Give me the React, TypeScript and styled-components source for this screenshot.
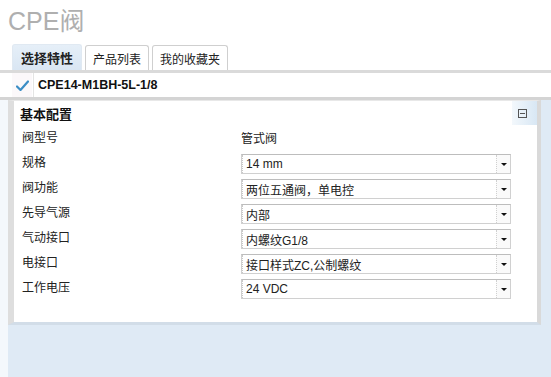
import React from 'react';
import styled, { createGlobalStyle } from 'styled-components';

const GlobalStyle = createGlobalStyle`
  html, body {
    margin: 0;
    padding: 0;
    background: #fff;
  }
  body {
    font-family: "Liberation Sans", "Noto Sans CJK SC", sans-serif;
    font-size: 12px;
    color: #222;
  }
`;

const Page = styled.div`
  width: 551px;
  height: 377px;
  display: flex;
  flex-direction: column;
  overflow: hidden;
`;

const Title = styled.h1`
  margin: 0;
  padding: 6px 0 0 8px;
  height: 38px;
  font-size: 25px;
  line-height: 30px;
  font-weight: 400;
  color: #afafaf;
  font-family: "Liberation Sans", "Noto Sans CJK SC", sans-serif;
`;

const TabBar = styled.div`
  display: flex;
  align-items: flex-end;
  gap: 3px;
  height: 26px;
  padding-left: 12px;
`;

const Tab = styled.div<{ $active?: boolean }>`
  height: ${(p) => (p.$active ? '26px' : '25px')};
  box-sizing: border-box;
  padding: 0 ${(p) => (p.$active ? '8px' : '7px')};
  display: flex;
  align-items: center;
  font-size: ${(p) => (p.$active ? '13px' : '12px')};
  font-weight: ${(p) => (p.$active ? 700 : 400)};
  color: #222;
  background: ${(p) => (p.$active ? 'linear-gradient(#e6eff8, #d9e6f3)' : '#fff')};
  border: 1px solid ${(p) => (p.$active ? '#e0e9f2' : '#cfcfcf')};
  border-bottom: none;
  border-radius: 3px 3px 0 0;
`;

const Workspace = styled.div`
  flex: 1;
  display: flex;
  flex-direction: column;
  background: #dfeaf5;
`;

const SelectionBar = styled.div`
  display: flex;
  height: 24px;
  background: #fff;
  border-top: 3px solid #dadada;
  border-bottom: 3px solid #d4d4d4;
  padding-left: 12px;
`;

const CheckCell = styled.div`
  width: 20px;
  display: flex;
  align-items: center;
  justify-content: center;
  background: #fbf8fa;
  margin-right: 1px;
`;

const ProductCode = styled.div`
  flex: 1;
  display: flex;
  align-items: center;
  padding-left: 4px;
  border-left: 1px solid #e4e4e4;
  font-weight: 700;
  font-size: 12.5px;
  color: #111;
`;

const PanelArea = styled.div`
  flex: 1;
  display: flex;
  flex-direction: column;
  border-left: 8px solid #f4f8fc;
  padding-right: 10px;
`;

const Panel = styled.section`
  background: #fff;
  border-left: 6px solid #dedede;
  border-right: 4px solid #d9d9d9;
  border-bottom: 3px solid #d2dde8;
  border-top: 1px solid #e8e8e8;
  padding-bottom: 22px;
`;

const PanelHeader = styled.div`
  display: flex;
  align-items: center;
  justify-content: space-between;
  height: 24px;
  padding-left: 6px;
  font-size: 13px;
  font-weight: 700;
  color: #111;
`;

const CollapseButton = styled.div`
  width: 25px;
  height: 24px;
  display: flex;
  align-items: center;
  padding-left: 6px;
  box-sizing: border-box;
  background: linear-gradient(to right, #f3f8fc, #d8e7f4);
`;

const Grid = styled.div`
  display: grid;
  grid-template-columns: 227px 270px;
  grid-auto-rows: 25px;
`;

const Label = styled.div`
  display: flex;
  align-items: center;
  padding-left: 8px;
  padding-bottom: 3px;
  color: #222;
`;

const Value = styled.div`
  display: flex;
  align-items: center;
  color: #222;
`;

const Select = styled.div`
  display: flex;
  align-items: stretch;
  width: 270px;
  height: 20px;
  margin-top: 4px;
  box-sizing: border-box;
  border: 1px solid #d0d0d0;
  border-top-color: #bdbdbd;
  background: #fff;
`;

const SelectText = styled.div`
  flex: 1;
  display: flex;
  align-items: center;
  padding-left: 3px;
  border-left: 1px dotted #c8c8c8;
`;

const ArrowBox = styled.div`
  width: 13px;
  display: flex;
  align-items: center;
  justify-content: center;
  border-left: 1px dotted #d0d0d0;
  background: #fafafa;
`;

const Arrow = styled.span`
  width: 0;
  height: 0;
  border-left: 3px solid transparent;
  border-right: 3px solid transparent;
  border-top: 3px solid #111;
`;

const CheckIcon = () => (
  <svg width="13" height="11" viewBox="0 0 13 11">
    <path d="M1 6.5 L4.5 10 L12 1.5" fill="none" stroke="#3b8dc5" strokeWidth="2.2" strokeLinecap="round" strokeLinejoin="round" />
  </svg>
);

const CollapseIcon = () => (
  <svg width="9" height="9" viewBox="0 0 9 9">
    <rect x="0.5" y="0.5" width="8" height="8" fill="none" stroke="#555" />
    <path d="M2 4.5 H7" stroke="#555" />
  </svg>
);

type Field = { label: string; value: string; select?: boolean };

const fields: Field[] = [
  { label: '阀型号', value: '管式阀' },
  { label: '规格', value: '14 mm', select: true },
  { label: '阀功能', value: '两位五通阀，单电控', select: true },
  { label: '先导气源', value: '内部', select: true },
  { label: '气动接口', value: '内螺纹G1/8', select: true },
  { label: '电接口', value: '接口样式ZC,公制螺纹', select: true },
  { label: '工作电压', value: '24 VDC', select: true },
];

export default function App() {
  return (
    <>
      <GlobalStyle />
      <Page>
        <Title>CPE阀</Title>
        <TabBar>
          <Tab $active>选择特性</Tab>
          <Tab>产品列表</Tab>
          <Tab>我的收藏夹</Tab>
        </TabBar>
        <Workspace>
          <SelectionBar>
            <CheckCell>
              <CheckIcon />
            </CheckCell>
            <ProductCode>CPE14-M1BH-5L-1/8</ProductCode>
          </SelectionBar>
          <PanelArea>
            <Panel>
              <PanelHeader>
                基本配置
                <CollapseButton>
                  <CollapseIcon />
                </CollapseButton>
              </PanelHeader>
              <Grid>
                {fields.map((f) => (
                  <React.Fragment key={f.label}>
                    <Label>{f.label}</Label>
                    {f.select ? (
                      <Select>
                        <SelectText>{f.value}</SelectText>
                        <ArrowBox>
                          <Arrow />
                        </ArrowBox>
                      </Select>
                    ) : (
                      <Value>{f.value}</Value>
                    )}
                  </React.Fragment>
                ))}
              </Grid>
            </Panel>
          </PanelArea>
        </Workspace>
      </Page>
    </>
  );
}
